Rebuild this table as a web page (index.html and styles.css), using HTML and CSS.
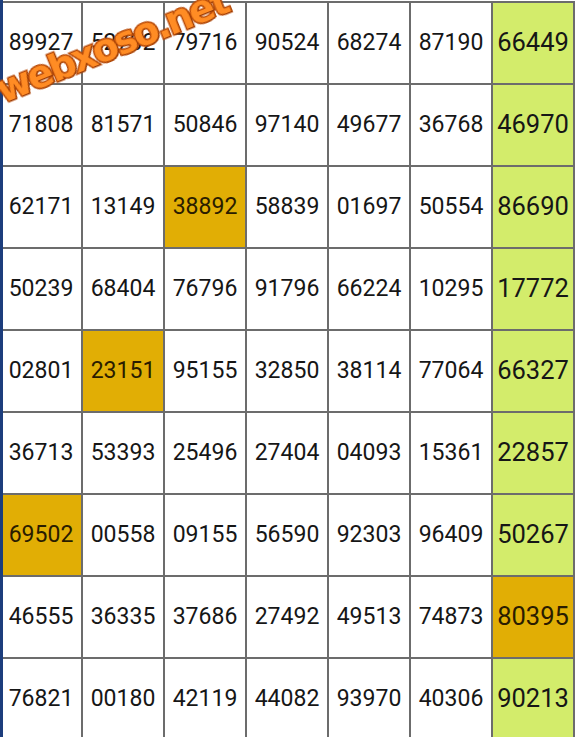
FILE: index.html
```html
<!DOCTYPE html>
<html>
<head>
<meta charset="utf-8">
<link rel="stylesheet" href="styles.css">
</head>
<body>
<div class="edge"></div>
<div class="board">
  <div class="cell">89927</div><div class="cell">52702</div><div class="cell">79716</div><div class="cell">90524</div><div class="cell">68274</div><div class="cell">87190</div><div class="cell last">66449</div>
  <div class="cell">71808</div><div class="cell">81571</div><div class="cell">50846</div><div class="cell">97140</div><div class="cell">49677</div><div class="cell">36768</div><div class="cell last">46970</div>
  <div class="cell">62171</div><div class="cell">13149</div><div class="cell hit">38892</div><div class="cell">58839</div><div class="cell">01697</div><div class="cell">50554</div><div class="cell last">86690</div>
  <div class="cell">50239</div><div class="cell">68404</div><div class="cell">76796</div><div class="cell">91796</div><div class="cell">66224</div><div class="cell">10295</div><div class="cell last">17772</div>
  <div class="cell">02801</div><div class="cell hit">23151</div><div class="cell">95155</div><div class="cell">32850</div><div class="cell">38114</div><div class="cell">77064</div><div class="cell last">66327</div>
  <div class="cell">36713</div><div class="cell">53393</div><div class="cell">25496</div><div class="cell">27404</div><div class="cell">04093</div><div class="cell">15361</div><div class="cell last">22857</div>
  <div class="cell hit">69502</div><div class="cell">00558</div><div class="cell">09155</div><div class="cell">56590</div><div class="cell">92303</div><div class="cell">96409</div><div class="cell last">50267</div>
  <div class="cell">46555</div><div class="cell">36335</div><div class="cell">37686</div><div class="cell">27492</div><div class="cell">49513</div><div class="cell">74873</div><div class="cell last hit">80395</div>
  <div class="cell">76821</div><div class="cell">00180</div><div class="cell">42119</div><div class="cell">44082</div><div class="cell">93970</div><div class="cell">40306</div><div class="cell last">90213</div>
</div>
<div class="watermark">webxoso.net</div>
</body>
</html>
```
FILE: styles.css
```css
html, body {
  margin: 0;
  padding: 0;
  background: #ffffff;
  overflow: hidden;
  width: 577px;
  height: 737px;
}
.board {
  display: grid;
  grid-template-columns: repeat(7, 80px);
  grid-auto-rows: 80px;
  gap: 2px;
  padding: 2px;
  background: #6c6c6c;
  width: max-content;
  margin-left: -1px;
  margin-top: 1px;
}
.cell {
  background: #ffffff;
  display: flex;
  align-items: center;
  justify-content: center;
  font-family: Roboto, "Noto Sans", sans-serif;
  font-size: 23px;
  color: #161616;
  padding-bottom: 2px;
  box-sizing: border-box;
}
.cell.last {
  background: #d3ec6b;
  font-size: 25.5px;
}
.cell.hit {
  background: #e1ae05;
  color: #2a1c00;
}
.edge {
  position: fixed;
  left: 0;
  top: 0;
  width: 3px;
  height: 737px;
  background: #1c3d7c;
  z-index: 2;
}
.watermark {
  position: absolute;
  left: 5px;
  top: 71px;
  transform: rotate(-22deg);
  transform-origin: left bottom;
  font-family: "DejaVu Sans", sans-serif;
  font-weight: bold;
  font-size: 38px;
  line-height: 1;
  color: #ff8c24;
  -webkit-text-stroke: 3px #b84a08;
  paint-order: stroke fill;
  text-shadow: 1px 1px 0 #9a3a04;
  letter-spacing: -2.5px;
  z-index: 3;
}
```
